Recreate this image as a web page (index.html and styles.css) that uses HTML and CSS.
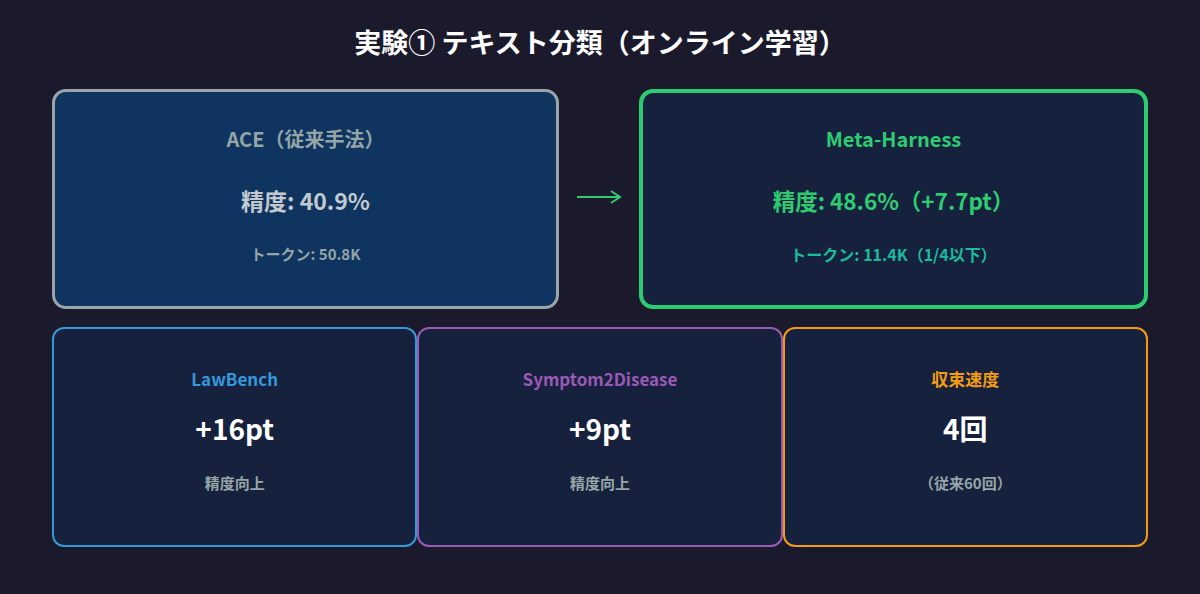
FILE: index.html
```html
<!DOCTYPE html>
<html lang="ja">
<head>
<meta charset="utf-8">
<title>実験① テキスト分類</title>
<link rel="stylesheet" href="styles.css">
</head>
<body>
<main class="page">
  <h1 class="title">実験① テキスト分類（オンライン学習）</h1>
  <section class="compare">
    <div class="box box-old">
      <div class="box-label">ACE（従来手法）</div>
      <div class="box-main">精度: 40.9%</div>
      <div class="box-sub">トークン: 50.8K</div>
    </div>
    <div class="arrow">
      <svg width="48" height="20" viewBox="0 0 48 20" aria-hidden="true">
        <path d="M2 10 H44" stroke="#2ecc71" stroke-width="2" fill="none"/>
        <path d="M36 4 L45 10 L36 16" stroke="#2ecc71" stroke-width="2" fill="none" stroke-linejoin="miter"/>
      </svg>
    </div>
    <div class="box box-new">
      <div class="box-label">Meta-Harness</div>
      <div class="box-main">精度: 48.6%（+7.7pt）</div>
      <div class="box-sub">トークン: 11.4K（1/4以下）</div>
    </div>
  </section>
  <section class="stats">
    <div class="card card-blue">
      <div class="card-label">LawBench</div>
      <div class="card-value">+16pt</div>
      <div class="card-sub">精度向上</div>
    </div>
    <div class="card card-purple">
      <div class="card-label">Symptom2Disease</div>
      <div class="card-value">+9pt</div>
      <div class="card-sub">精度向上</div>
    </div>
    <div class="card card-orange">
      <div class="card-label">収束速度</div>
      <div class="card-value">4回</div>
      <div class="card-sub">（従来60回）</div>
    </div>
  </section>
</main>
</body>
</html>
```

FILE: styles.css
```css
html, body {
  margin: 0;
  padding: 0;
  background: #1b1a2c;
}
body {
  width: 1200px;
  height: 594px;
  overflow: hidden;
  font-family: "Noto Sans CJK JP", "Noto Sans", sans-serif;
  color: #ffffff;
}
.page {
  padding: 22px 52px 0 52px;
  box-sizing: border-box;
}
.title {
  margin: 0;
  height: 40px;
  line-height: 40px;
  text-align: center;
  font-size: 27px;
  font-weight: 700;
  color: #ffffff;
}
.compare {
  margin-top: 27px;
  display: flex;
  align-items: center;
}
.box {
  flex: 1;
  height: 220px;
  box-sizing: border-box;
  border-radius: 14px;
  display: flex;
  flex-direction: column;
  align-items: center;
  justify-content: flex-start;
  padding-top: 33px;
}
.box-old {
  background: #0f3460;
  border: 3px solid #9aa4ab;
}
.box-new {
  background: #16213e;
  border: 4px solid #2ecc71;
  padding-top: 32px;
}
.arrow {
  width: 80px;
  display: flex;
  justify-content: center;
  padding-bottom: 4px;
}
.box-label {
  font-size: 20px;
  font-weight: 700;
  line-height: 28px;
}
.box-main {
  margin-top: 31px;
  font-size: 23px;
  font-weight: 700;
  line-height: 32px;
}
.box-sub {
  margin-top: 26px;
  font-size: 16px;
  font-weight: 700;
  line-height: 24px;
}
.box-old .box-label { color: #95a5a6; }
.box-old .box-main { color: #c2c9cf; }
.box-old .box-sub { color: #95a5a6; font-size: 15px; }
.box-new .box-label { color: #2ecc71; }
.box-new .box-main { color: #2ecc71; font-size: 22.5px; }
.box-new .box-sub { color: #1abc9c; }

.stats {
  margin-top: 18px;
  display: grid;
  grid-template-columns: 1fr 1fr 1fr;
}
.card {
  height: 220px;
  box-sizing: border-box;
  background: #16213e;
  border: 2px solid;
  border-radius: 12px;
  display: flex;
  flex-direction: column;
  align-items: center;
  justify-content: flex-start;
  padding-top: 38px;
}
.card-blue { border-color: #3498db; }
.card-purple { border-color: #9b59b6; }
.card-orange { border-color: #f39c12; }
.card-label {
  font-size: 17px;
  font-weight: 700;
  line-height: 24px;
}
.card-blue .card-label { color: #3498db; }
.card-purple .card-label { color: #9b59b6; }
.card-orange .card-label { color: #f39c12; }
.card-value {
  margin-top: 19px;
  font-size: 28px;
  font-weight: 700;
  line-height: 36px;
  color: #ffffff;
}
.card-sub {
  margin-top: 27px;
  font-size: 15px;
  font-weight: 700;
  line-height: 20px;
  color: #95a5a6;
}
```
